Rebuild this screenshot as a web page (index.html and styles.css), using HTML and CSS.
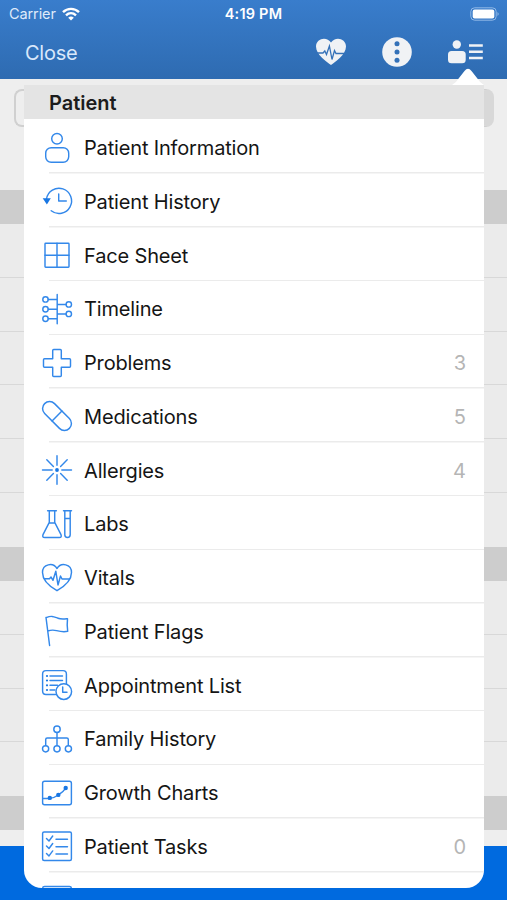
FILE: index.html
```html
<!DOCTYPE html>
<html lang="en">
<head>
<meta charset="utf-8">
<title>Patient menu</title>
<link rel="stylesheet" href="styles.css">
</head>
<body>
<div class="screen">
  <header class="top">
    <div class="status">
      <div class="carrier"><span>Carrier</span>
        <svg width="18" height="14" viewBox="0 0 18 14" fill="none" stroke="#fff" stroke-width="2.4"><path d="M1 5.2C5.500.700 12.500.700 17 5.200M4 8.300C7 5.500 11 5.500 14 8.300"/><path d="M9 13.500L6.200 10.700Q9 8.400 11.800 10.700Z" fill="#fff" stroke="none"/></svg>
      </div>
      <div class="time">4:19 PM</div>
      <svg class="battery" width="30" height="14" viewBox="0 0 30 14"><rect x=".8" y=".8" width="25.400" height="12.400" rx="3.800" fill="none" stroke="#91b9e7"/><rect x="2.700" y="2.600" width="21.600" height="8.800" rx="2" fill="#fff"/><path d="M27.500 5q2.400 2 0 4z" fill="#91b9e7"/></svg>
    </div>
    <nav class="nav">
      <span class="close">Close</span>
      <div class="actions">
        <svg width="30" height="28" viewBox="0 0 30 28"><path d="M15 27C11 24 0 17 0 8.500C0 0 11-2 15 4.500C19-2 30 0 30 8.500C30 17 19 24 15 27Z" fill="#f0f2f5"/><path d="M1 15H7L8.800 13L10.500 16.500L13.400 8L16 21.500L18.500 12.500L20 15.500H29" fill="none" stroke="#3471b8" stroke-width="1.300"/></svg>
        <svg width="30" height="30" viewBox="0 0 30 30"><circle cx="15" cy="15" r="14.800" fill="#f0f2f5"/><g fill="#3471b8"><circle cx="15" cy="6.700" r="2.500"/><circle cx="15" cy="15" r="2.500"/><circle cx="15" cy="23.300" r="2.500"/></g></svg>
        <svg width="35" height="24" viewBox="0 0 35 24" fill="#f0f2f5"><circle cx="8.800" cy="4.500" r="4.200"/><rect x="0" y="11" width="17.700" height="12.200" rx="3.500"/><path d="M21 4.300h13.800v2.400H21zM21 10.600h13.800V13H21zM21 16.800h13.800v2.400H21z"/></svg>
      </div>
    </nav>
  </header>
  <main class="backdrop">
    <div class="search"><div class="field"></div></div>
    <div class="band"></div>
    <div class="rows"><i></i><i></i><i></i><i></i><i></i><i></i></div>
    <div class="band"></div>
    <div class="rows short"><i></i><i></i><i></i><i></i></div>
    <div class="band"></div>
    <div class="gap"></div>
    <div class="footer"></div>
  </main>
  <svg class="pointer" width="32" height="17" viewBox="0 0 32 17"><path d="M0 17Q4 15 7 10L12.500 3Q16-1.500 19.500 3L25 10Q28 15 32 17Z" fill="#fff"/></svg>
  <section class="menu">
    <h1>Patient</h1>
    <ul>
      <li><svg viewBox="0 0 30 30"><circle cx="15" cy="5.700" r="5.300"/><rect x="3.700" y="14.700" width="23" height="14.600" rx="5.500"/></svg><div>Patient Information</div></li>
      <li><svg viewBox="0 0 30 30"><path d="M4.500 13A12.600 12.600 0 1 1 9.200 24.800M16.700 8V15H24.300"/><path class="solid" d="M.7 12.300H8.800L4.900 18.500Z"/></svg><div>Patient History</div></li>
      <li><svg viewBox="0 0 30 30"><rect x="3" y="3.300" width="24" height="24" rx=".7"/><path d="M15 3.300v24M3 15.300h24"/></svg><div>Face Sheet</div></li>
      <li><svg viewBox="0 0 30 30"><path d="M15.200.5V29.800M6.300 5.400h9M6.300 15.200h9M6.300 24.700h9M15.200 10.400h9M15.200 19.900h9"/><circle cx="3.500" cy="5.400" r="2.700"/><circle cx="3.500" cy="15.200" r="2.700"/><circle cx="3.500" cy="24.700" r="2.700"/><circle cx="26.800" cy="10.400" r="2.700"/><circle cx="26.800" cy="19.900" r="2.700"/></svg><div>Timeline</div></li>
      <li><svg viewBox="0 0 30 30"><path d="M11.700 1.500h6.600q1 0 1 1v8.200h8.200q1 0 1 1v6.600q0 1-1 1h-8.200v8.200q0 1-1 1h-6.600q-1 0-1-1v-8.200H2.500q-1 0-1-1v-6.600q0-1 1-1h8.200V2.500q0-1 1-1z"/></svg><div>Problems</div><b>3</b></li>
      <li><svg viewBox="0 0 30 30"><g transform="rotate(45 15 15)"><rect x="-2.500" y="8" width="35" height="14" rx="7"/><path d="M15 8v14"/></g></svg><div>Medications</div><b>5</b></li>
      <li><svg viewBox="0 0 30 30"><path d="M15 .7V10.300M15 19.700V29.300M.5 15H10.200M19.800 15H29.500M4.800 4.800l6.600 6.600M18.600 18.600l6.600 6.600M25.200 4.800l-6.600 6.600M11.400 18.600l-6.600 6.600"/><circle class="solid" cx="15" cy="15" r="1.900"/></svg><div>Allergies</div><b>4</b></li>
      <li><svg viewBox="0 0 30 30"><path d="M5.600 1.700h8.800M7.300 1.700v11.700L1 25.700q-1 2.800 1.700 2.800h14.600q2.700 0 1.700-2.800L12.700 13.400V1.700M7.300 14h5.400M21.500 1.700h8M22.800 1.700v24a2.700 2.700 0 0 0 5.400 0v-24M22.800 9.500h5.400"/></svg><div>Labs</div></li>
      <li><svg viewBox="0 0 30 30"><path d="M15 27.700C11 25.400.5 18.500.5 9.500C.5 1 11-1 15 5.500C19-1 29.500 1 29.500 9.500C29.500 18.500 19 25.400 15 27.700Z"/><path d="M2.500 15.800H7.500L9 14L11 17.300L13.800 8.200L16 22L18.500 13L20 16H27.500"/></svg><div>Vitals</div></li>
      <li><svg viewBox="0 0 30 30"><path d="M4 1.500L7.600 29.500M4.200 1.700C10-.8 12 .8 16 2.300C19 3.400 22 3 25.500 2.700Q24.800 9 25.700 15.300C21 16.300 18 15.500 14.500 14.600Q10 13.500 5.800 15"/></svg><div>Patient Flags</div></li>
      <li><svg viewBox="0 0 30 30"><path d="M13.500 24.500H4Q.6 24.500.6 21V4Q.6.600 4 .6H21Q24.400.6 24.400 4V13.500M8 6H20.500M8 10.500H20.500M8 15.300H15.500M8 20H13"/><circle cx="21.800" cy="21.600" r="7.800"/><path d="M20.700 17V22.200H25"/><g class="solid"><circle cx="5" cy="6" r="1.100"/><circle cx="5" cy="10.500" r="1.100"/><circle cx="5" cy="15.300" r="1.100"/><circle cx="5" cy="20" r="1.100"/></g></svg><div>Appointment List</div></li>
      <li><svg viewBox="0 0 30 30"><path d="M15 8.500V21.500M3.700 21.500V15.500Q3.700 14 5.200 14H24.800Q26.300 14 26.300 15.500V21.500"/><circle cx="15" cy="5.200" r="3.200"/><circle cx="3.600" cy="24.800" r="3.100"/><circle cx="15" cy="24.800" r="3.100"/><circle cx="26.400" cy="24.800" r="3.100"/></svg><div>Family History</div></li>
      <li><svg viewBox="0 0 30 30"><rect x=".6" y="3.300" width="28.800" height="23.500" rx="2"/><path d="M1 20.400H7.700Q12.500 19.800 16.300 17Q21 14.500 23.700 10.200"/><g class="solid"><circle cx="7.800" cy="19.900" r="2.200"/><circle cx="16.300" cy="16.900" r="2.200"/><circle cx="23.700" cy="10" r="2.200"/></g></svg><div>Growth Charts</div></li>
      <li><svg viewBox="0 0 30 30"><rect x=".6" y="1" width="28.800" height="28.400" rx="1.500"/><path d="M4.500 7.500L7 10L10.700 5M4.500 15L7 17.500L10.700 12.500M4.500 22.400L7 24.900L10.700 19.900M14 8.300H25.500M14 15.700H25.500M14 23H25.500"/></svg><div>Patient Tasks</div><b>0</b></li>
      <li><svg viewBox="0 0 30 30"><rect x=".6" y="1.400" width="28.800" height="28" rx="2"/></svg><div></div></li>
    </ul>
  </section>
</div>
</body>
</html>
```

FILE: styles.css
```css
* { box-sizing: border-box; }
body { margin: 0; font-family: Inter, "Liberation Sans", sans-serif; }
.screen { position: relative; width: 507px; height: 900px; overflow: hidden; background: #eee; }
.top { height: 79px; background: linear-gradient(#397dcc, #2e6bb1); color: #fff; }
.status { display: grid; grid-template-columns: 1fr auto 1fr; align-items: center; height: 27px; padding: 0 7px 0 9px; }
.carrier { display: flex; align-items: center; gap: 6px; font-size: 14.5px; letter-spacing: -.1px; color: #dfeafa; }
.time { position: relative; left: -1px; font-size: 14.5px; font-weight: 600; letter-spacing: .2px; }
.battery { justify-self: end; }
.nav { display: flex; justify-content: space-between; align-items: center; height: 50px; padding: 0 24px 0 25px; }
.close { padding-top: 1px; font-size: 20px; letter-spacing: -.25px; color: #d9e8fb; }
.actions { display: flex; align-items: center; gap: 36px; }
.backdrop { display: flex; flex-direction: column; }
.search { height: 111px; padding: 10px 13px 0 14px; }
.field { height: 38px; border: 2px solid #d0d0d0; border-right: 16px solid #d8d8d8; border-radius: 8px; }
.band { height: 34px; background: #cdcdcd; }
.rows { height: 323px; display: grid; grid-template-rows: repeat(6, 1fr); background: #ebebeb; }
.rows.short { height: 215px; grid-template-rows: repeat(4, 1fr); }
.rows i { border-bottom: 1px solid #d8d8d8; }
.rows i:last-child { border: 0; }
.gap { height: 16px; }
.footer { height: 54px; background: #006adf; }
.pointer { position: absolute; left: 452px; top: 68px; }
.menu { position: absolute; left: 24px; top: 85px; width: 460px; height: 803px; overflow: hidden; background: #fff; border-radius: 0 0 18px 18px; }
h1 { margin: 0; height: 34px; padding-left: 25px; background: #e4e4e4; color: #1c1c1c; font-size: 20px; font-weight: 600; line-height: 37px; letter-spacing: 0; }
ul { margin: 0; padding: 1px 0 0; list-style: none; }
li { display: flex; align-items: center; height: 53.750px; padding: 1.500px 18px 0 18px; background: linear-gradient(#ebebeb, #ebebeb) 25px 100% / 100% 1.500px no-repeat; }
li svg { flex: none; width: 30px; height: 30px; overflow: visible; fill: none; stroke: #3388ea; stroke-width: 1.450; stroke-linecap: round; stroke-linejoin: round; }
li .solid { fill: #1876e3; stroke: none; }
li div { flex: 1; margin-left: 12px; padding-top: 1px; color: #151515; font-size: 20px; letter-spacing: -.16px; }
li b { padding-top: 1px; font-size: 20px; font-weight: 400; color: #b5b5b5; }
```
